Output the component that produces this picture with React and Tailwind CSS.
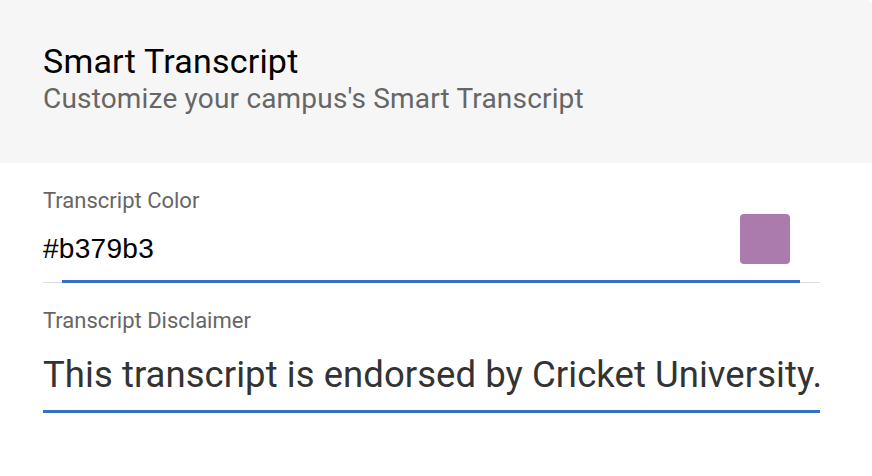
export default function App() {
  return (
    <div className="w-[872px] h-[476px] bg-white font-['Roboto',sans-serif] overflow-hidden">
      <div className="bg-[#f6f6f6] rounded-tr-[6px] h-[163px] px-[43px] pt-[41px]">
        <h1 className="text-[34px] leading-[40px] text-black tracking-[0.2px]">Smart Transcript</h1>
        <p className="mt-[2px] text-[28px] leading-[32px] text-[#666666] tracking-[0.18px]">Customize your campus's Smart Transcript</p>
      </div>

      <div className="pl-[43px] pr-[52px] pt-[25px]">
        <label className="block text-[22px] leading-[26px] text-[#666666]">Transcript Color</label>
        <div className="relative h-[69px] flex items-start pr-[30px]">
          <span className="flex-1 pt-[19px] font-['Liberation_Sans',Arial,sans-serif] text-[28px] leading-[32px] text-black tracking-[0.3px]">
            #b379b3
          </span>
          <div className="w-[50px] h-[50px] rounded-[4px] bg-[#ab7bad]" />
          <div className="absolute left-0 right-0 bottom-0 h-[1px] bg-[#dddddd]" />
          <div className="absolute left-[19px] right-[20px] bottom-0 h-[3px] bg-[#3471c4]" />
        </div>

        <label className="block mt-[25px] text-[22px] leading-[26px] text-[#666666]">Transcript Disclaimer</label>
        <div className="pt-[19px] pb-[13px] border-b-[3px] border-[#3471c4]">
          <span className="block text-[36.5px] leading-[44px] text-[#333333] whitespace-nowrap tracking-[0.05px]">
            This transcript is endorsed by Cricket University.
          </span>
        </div>
      </div>
    </div>
  );
}
